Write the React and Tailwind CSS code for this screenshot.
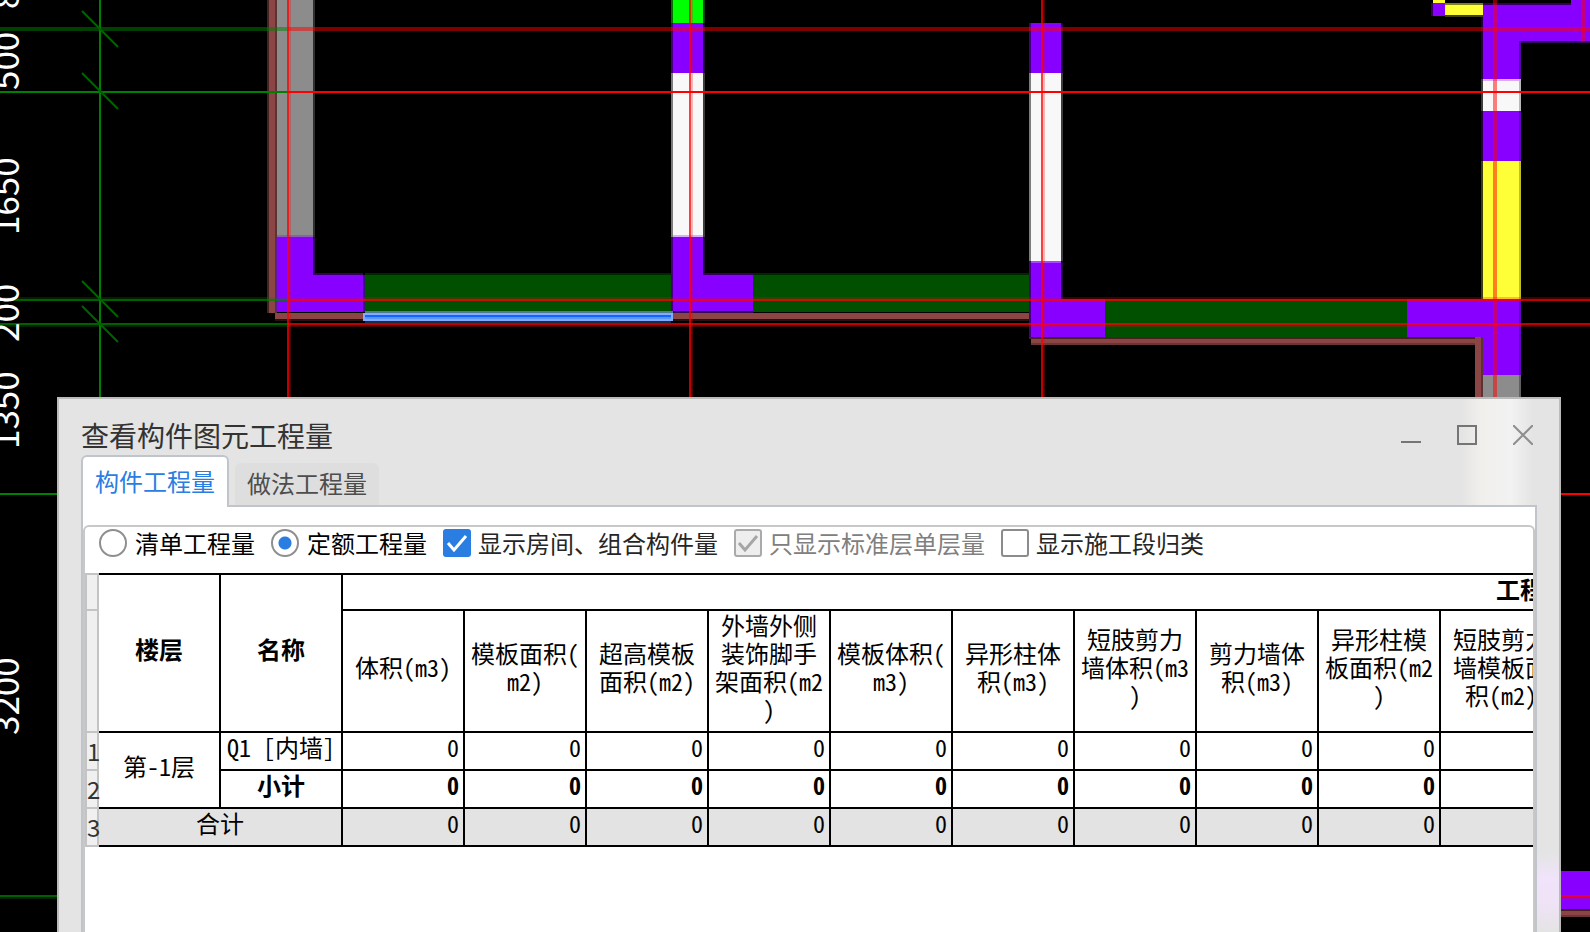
import { useState } from "react";

const columns = [
    ['体积(m3)'],
    ['模板面积(', 'm2)'],
    ['超高模板', '面积(m2)'],
    ['外墙外侧', '装饰脚手', '架面积(m2', ')'],
    ['模板体积(', 'm3)'],
    ['异形柱体', '积(m3)'],
    ['短肢剪力', '墙体积(m3', ')'],
    ['剪力墙体', '积(m3)'],
    ['异形柱模', '板面积(m2', ')'],
    ['短肢剪力', '墙模板面', '积(m2)'],
];

// [x, y, width, height, color]
const walls = [
    [267, 0, 2, 313, '#462323'],
    [269, 0, 6, 313, '#8b4545'],
    [275, 0, 2, 313, '#5a3434'],
    [277, 0, 36, 237, '#8c8c8c'],
    [313, 0, 2, 237, '#303030'],
    [277, 235, 36, 2, '#8a60b0'],
    [365, 273, 306, 2, '#002800'],
    [365, 275, 306, 36, '#005000'],
    [753, 273, 277, 2, '#002800'],
    [753, 275, 277, 37, '#005000'],
    [275, 313, 756, 6, '#8b4545'],
    [275, 319, 756, 2, '#241111'],
    [275, 237, 2, 75, '#5a2090'],
    [277, 237, 36, 75, '#8800ff'],
    [313, 237, 2, 37, '#330060'],
    [313, 273, 50, 2, '#330060'],
    [313, 275, 50, 37, '#8800ff'],
    [363, 275, 2, 37, '#3c1080'],
    [671, 0, 2, 23, '#007000'],
    [673, 0, 30, 23, '#00ff00'],
    [703, 0, 2, 23, '#004000'],
    [671, 23, 2, 50, '#440080'],
    [673, 23, 30, 50, '#8800ff'],
    [703, 23, 2, 50, '#220040'],
    [671, 73, 2, 164, '#7c7c7c'],
    [673, 73, 30, 162, '#f8f8f8'],
    [703, 73, 2, 164, '#3e3e3e'],
    [673, 235, 30, 2, '#d8b0fa'],
    [671, 237, 2, 74, '#440080'],
    [673, 237, 30, 74, '#8800ff'],
    [703, 237, 2, 37, '#220040'],
    [703, 273, 50, 2, '#330060'],
    [703, 275, 50, 36, '#8800ff'],
    [673, 311, 80, 2, '#330055'],
    [1029, 23, 2, 50, '#440080'],
    [1031, 23, 30, 50, '#8800ff'],
    [1061, 23, 2, 50, '#220040'],
    [1029, 73, 2, 188, '#7c7c7c'],
    [1031, 73, 30, 188, '#f8f8f8'],
    [1061, 73, 2, 188, '#3e3e3e'],
    [1029, 261, 2, 76, '#440080'],
    [1031, 261, 30, 76, '#8800ff'],
    [1031, 261, 30, 2, '#a848ff'],
    [1061, 261, 2, 38, '#220040'],
    [1061, 299, 44, 38, '#8800ff'],
    [1105, 299, 302, 38, '#005000'],
    [1029, 337, 446, 2, '#46211f'],
    [1031, 339, 450, 4, '#8b4545'],
    [1031, 343, 450, 2, '#6c3535'],
    [1475, 337, 6, 64, '#8b4545'],
    [1481, 337, 2, 64, '#5a3434'],
    [1407, 299, 76, 38, '#8800ff'],
    [1433, 0, 12, 3, '#ffff38'],
    [1431, 3, 2, 13, '#330060'],
    [1433, 3, 12, 13, '#8800ff'],
    [1445, 3, 38, 2, '#80801c'],
    [1445, 5, 38, 10, '#ffff38'],
    [1445, 15, 38, 2, '#40400e'],
    [1481, 17, 2, 62, '#220040'],
    [1483, 3, 107, 2, '#330060'],
    [1483, 5, 107, 36, '#8800ff'],
    [1519, 41, 71, 2, '#330060'],
    [1571, 0, 19, 6, '#8800ff'],
    [1483, 41, 36, 38, '#8800ff'],
    [1519, 41, 2, 38, '#5500a0'],
    [1481, 79, 2, 32, '#3e3e3e'],
    [1483, 79, 36, 32, '#f8f8f8'],
    [1519, 79, 2, 32, '#b8b8b8'],
    [1483, 79, 36, 2, '#d8b0fa'],
    [1481, 111, 2, 50, '#220040'],
    [1483, 111, 36, 50, '#8800ff'],
    [1519, 111, 2, 50, '#6600c0'],
    [1481, 161, 2, 138, '#403f10'],
    [1483, 161, 36, 138, '#ffff38'],
    [1519, 161, 2, 138, '#bfbf2a'],
    [1483, 299, 36, 76, '#8800ff'],
    [1519, 299, 2, 76, '#6600c0'],
    [1483, 375, 36, 26, '#8c8c8c'],
    [1519, 375, 2, 26, '#606060'],
    [1555, 871, 35, 38, '#8800ff'],
    [1555, 909, 35, 2, '#46211f'],
    [1555, 911, 35, 4, '#8b4545'],
    [1555, 915, 35, 2, '#6c3535'],
];

const axes = [
    [0, 27, 287, 4, '#00800080'],
    [287, 27, 1303, 4, '#ff000080'],
    [0, 91, 287, 2, '#008000'],
    [287, 91, 1303, 2, '#ff0000'],
    [0, 297, 287, 2, '#00800040'],
    [0, 299, 287, 2, '#008000c0'],
    [287, 297, 1303, 2, '#ff000040'],
    [287, 299, 1303, 2, '#ff0000c0'],
    [0, 323, 287, 2, '#008000c0'],
    [0, 325, 287, 2, '#00800040'],
    [287, 323, 1303, 2, '#ff0000c0'],
    [287, 325, 1303, 2, '#ff000040'],
    [99, 0, 2, 400, '#008000'],
    [287, 0, 2, 400, '#ff0000c0'],
    [289, 0, 2, 400, '#ff000040'],
    [689, 0, 2, 400, '#ff0000c0'],
    [691, 0, 2, 400, '#ff000040'],
    [1041, 0, 2, 400, '#ff0000c0'],
    [1043, 0, 2, 400, '#ff000040'],
    [1493, 0, 4, 400, '#ff000080'],
    [1581, 0, 4, 42, '#ff000080'],
    [0, 493, 60, 2, '#008000'],
    [1555, 493, 35, 2, '#ff0000'],
    [0, 895, 60, 2, '#006000'],
    [0, 897, 60, 2, '#002000'],
    [1555, 895, 35, 2, '#ff0000c0'],
    [1555, 897, 35, 2, '#ff000040'],
];

const ticks = [29, 91, 299, 324];

const dims = [
    { y: 9, text: '8' },
    { y: 90, text: '500' },
    { y: 235, text: '1650' },
    { y: 342, text: '200' },
    { y: 449, text: '1350' },
    { y: 735, text: '3200' },
];

function Drawing() {
    return (
        <svg width="1590" height="932" viewBox="0 0 1590 932" className="absolute top-0 left-0">
            <g shapeRendering="crispEdges">
                {walls.map(([x, y, w, h, fill], i) => (
                    <rect key={i} x={x} y={y} width={w} height={h} fill={fill} />
                ))}
                {axes.map(([x, y, w, h, fill], i) => (
                    <rect key={i} x={x} y={y} width={w} height={h} fill={fill} />
                ))}
                {/* selected element */}
                <rect x="365" y="311" width="308" height="2" fill="#4a7c96" />
                <rect x="363" y="313" width="310" height="8" fill="#84aaff" />
                <rect x="365" y="315" width="306" height="2" fill="#1464ff" />
                <rect x="365" y="317" width="306" height="2" fill="#5a94ff" />
                <rect x="365" y="321" width="306" height="2" fill="#202c44" />
            </g>
            {ticks.map((y) => (
                <line key={y} x1="82" y1={y - 18} x2="118" y2={y + 18} stroke="#006400" strokeWidth="2" />
            ))}
            {dims.map(({ y, text }) => (
                <text
                    key={y}
                    transform={`translate(19 ${y}) rotate(-90)`}
                    fill="#fff"
                    className="font-['Noto_Sans_CJK_SC',sans-serif] text-[35px]"
                >
                    {text}
                </text>
            ))}
        </svg>
    );
}

function Radio({ label, checked, onChange }) {
    return (
        <label className="flex items-center gap-2">
            <input
                type="radio"
                name="quantity"
                checked={checked}
                onChange={onChange}
                className="size-7 appearance-none rounded-full border-2 border-[#8f8f8f] bg-white checked:bg-[radial-gradient(circle,#2a7de1_6px,#fff_7px)]"
            />
            {label}
        </label>
    );
}

function Checkbox({ label, checked, onChange, disabled }) {
    return (
        <label className={disabled ? "flex items-center gap-[7px] text-[#808080]" : "flex items-center gap-[7px] text-[#262626]"}>
            <span className="grid size-7">
                <input
                    type="checkbox"
                    checked={checked}
                    onChange={onChange}
                    disabled={disabled}
                    className="col-start-1 row-start-1 size-7 appearance-none rounded-[3px] border-2 border-[#8c8c8c] bg-white checked:border-[#2a7de1] checked:bg-[#2a7de1] disabled:border-[#aaa] disabled:bg-[#eee]"
                />
                {checked && (
                    <svg viewBox="0 0 28 28" className="pointer-events-none col-start-1 row-start-1 size-7">
                        <path d="M5 14L11 21L23 7" fill="none" stroke={disabled ? '#a6a6a6' : '#fff'} strokeWidth="3" />
                    </svg>
                )}
            </span>
            {label}
        </label>
    );
}

function RowNumber({ n }) {
    return <div className="w-[10px] font-['Noto_Sans_CJK_SC',sans-serif] text-[24px] leading-7">{n}</div>;
}

function QuantityTable() {
    const gutter = "border-x-2 border-b-2 border-[#c4c4c4] bg-[#f0f0f0] px-0 pt-0 pb-1 text-left align-bottom font-normal text-[#333]";
    const cell = "border-r-2 border-b-2 border-black px-1 pt-0 pb-2";

    return (
        <table className="w-[2698px] table-fixed border-separate border-spacing-0 font-['Noto_Sans_Mono_CJK_SC','Noto_Sans_CJK_SC',monospace] text-[24px] leading-7 text-black">
            <colgroup>
                <col className="w-[14px]" />
                <col className="w-[122px]" />
                <col className="w-[122px]" />
                {columns.map((_, i) => <col key={i} className="w-[122px]" />)}
                <col className="w-[1220px]" />
            </colgroup>
            <thead>
                <tr className="h-[38px]">
                    <td className={`${gutter} border-t-2`}></td>
                    <th rowSpan={2} className={`${cell} border-t-2 font-bold`}>楼层</th>
                    <th rowSpan={2} className={`${cell} border-t-2 font-bold`}>名称</th>
                    <th colSpan={11} className="border-y-2 border-r-2 border-black pt-0 pr-3 pb-[6px] pl-0 font-bold">工程量名称</th>
                </tr>
                <tr className="h-[122px]">
                    <td className={gutter}></td>
                    {columns.map((lines, i) => (
                        <th key={i} className="border-r-2 border-b-2 border-black px-0 pt-0 pb-2 font-normal whitespace-nowrap">
                            {lines.map((line) => <div key={line}>{line}</div>)}
                        </th>
                    ))}
                    <th className={cell}></th>
                </tr>
            </thead>
            <tbody>
                <tr className="h-[38px]">
                    <th className={gutter}><RowNumber n={1} /></th>
                    <td rowSpan={2} className={`${cell} text-center`}>第-1层</td>
                    <td className={`${cell} text-center whitespace-nowrap`}>Q1 [内墙]</td>
                    {columns.map((_, i) => <td key={i} className={`${cell} text-right`}>0</td>)}
                    <td className={cell}></td>
                </tr>
                <tr className="h-[38px] font-bold">
                    <th className={gutter}><RowNumber n={2} /></th>
                    <td className={`${cell} text-center`}>小计</td>
                    {columns.map((_, i) => <td key={i} className={`${cell} text-right`}>0</td>)}
                    <td className={cell}></td>
                </tr>
                <tr className="h-[38px]">
                    <th className={gutter}><RowNumber n={3} /></th>
                    <td colSpan={2} className={`${cell} bg-[#e3e3e3] text-center`}>合计</td>
                    {columns.map((_, i) => <td key={i} className={`${cell} bg-[#e3e3e3] text-right`}>0</td>)}
                    <td className={`${cell} bg-[#e3e3e3]`}></td>
                </tr>
            </tbody>
        </table>
    );
}

function App() {
    const [mode, setMode] = useState('quota');
    const [showRooms, setShowRooms] = useState(true);
    const [showStages, setShowStages] = useState(false);

    return (
        <div className="relative flex h-screen flex-col overflow-hidden bg-black pt-[397px] pr-[29px] pl-[57px] font-['Noto_Sans_CJK_SC',sans-serif]">
            <Drawing />
            <div className="relative flex min-h-0 flex-1 flex-col border-x-2 border-t-2 border-[#bbb] bg-[#e4e4e4]">
                <div className="bg-[linear-gradient(to_right,transparent_calc(100%-98px),#f1efec_calc(100%-78px),#f2f2f2_calc(100%-48px),transparent_calc(100%-26px))] px-[22px]">
                    <div className="flex h-14 items-center justify-between pt-4 pr-1">
                        <h1 className="text-[28px] leading-10 text-[#333]">查看构件图元工程量</h1>
                        <div className="flex gap-9 text-[#757575]">
                            <button aria-label="最小化">
                                <svg width="20" height="20" fill="currentColor"><rect y="16" width="20" height="2" /></svg>
                            </button>
                            <button aria-label="最大化">
                                <svg width="20" height="20" fill="none" stroke="currentColor" strokeWidth="2"><rect x="1" y="1" width="18" height="18" /></svg>
                            </button>
                            <button aria-label="关闭">
                                <svg width="20" height="20" fill="none" stroke="#8e8e8e" strokeWidth="2"><path d="M0 0L20 20M20 0L0 20" /></svg>
                            </button>
                        </div>
                    </div>
                    <div className="flex text-[24px] leading-8">
                        <button className="h-[52px] w-[148px] rounded-t-md border-2 border-b-0 border-[#c0c5cb] bg-white pb-[2px] text-[#2a7de1]">构件工程量</button>
                        <div className="flex flex-1 items-end border-b-2 border-[#c0c5cb] pl-[6px]">
                            <button className="h-[42px] w-36 rounded-t-md bg-[#dedede] pb-[2px] text-[#4d4d4d]">做法工程量</button>
                        </div>
                    </div>
                </div>
                <div className="flex min-h-0 flex-1 flex-col bg-[linear-gradient(to_bottom,transparent_346px,#f0e3fa_370px,#f0e3f8_394px,transparent_425px)] bg-[length:22px_100%] bg-right bg-no-repeat px-[22px]">
                    <div className="flex min-h-0 flex-1 flex-col border-x-2 border-[#c0c5cb] bg-white pt-[18px]">
                        <div className="min-h-0 flex-1 overflow-hidden rounded-t-md border-x-2 border-t-2 border-[#c8c8c8]">
                            <div className="flex h-[46px] items-start gap-4 pt-[2px] pl-[14px] text-[24px] leading-7 whitespace-nowrap text-black">
                                <Radio label="清单工程量" checked={mode === 'list'} onChange={() => setMode('list')} />
                                <Radio label="定额工程量" checked={mode === 'quota'} onChange={() => setMode('quota')} />
                                <Checkbox label="显示房间、组合构件量" checked={showRooms} onChange={(e) => setShowRooms(e.target.checked)} />
                                <Checkbox label="只显示标准层单层量" checked disabled />
                                <Checkbox label="显示施工段归类" checked={showStages} onChange={(e) => setShowStages(e.target.checked)} />
                            </div>
                            <QuantityTable />
                        </div>
                    </div>
                </div>
            </div>
        </div>
    );
}

export default App;
